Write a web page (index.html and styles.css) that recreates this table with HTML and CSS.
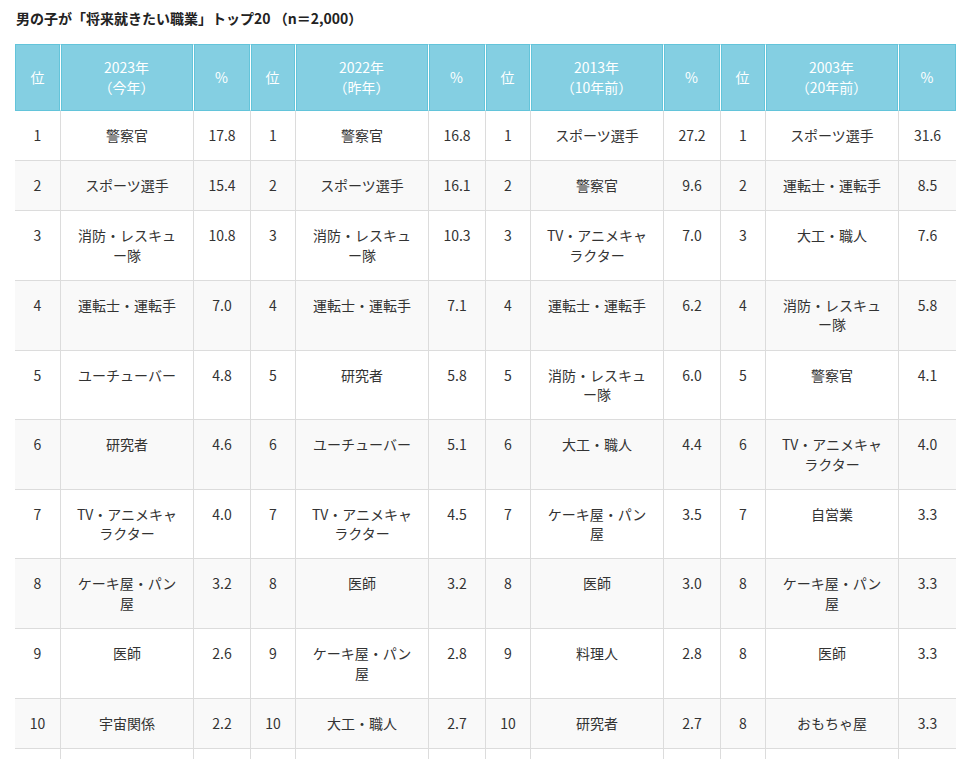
FILE: index.html
```html
<!DOCTYPE html>
<html lang="ja">
<head>
<meta charset="utf-8">
<title>男の子が「将来就きたい職業」トップ20</title>
<link rel="stylesheet" href="styles.css">
</head>
<body>
<div class="wrap">
  <h2 class="title">男の子が「将来就きたい職業」トップ20 （n＝2,000）</h2>
  <table class="rank">
    <colgroup>
      <col class="c-rank"><col class="c-job"><col class="c-pct">
      <col class="c-rank"><col class="c-job"><col class="c-pct">
      <col class="c-rank"><col class="c-job"><col class="c-pct">
      <col class="c-rank"><col class="c-job"><col class="c-pct-last">
    </colgroup>
    <thead>
      <tr>
        <th>位</th><th>2023年<br>（今年）</th><th>%</th>
        <th>位</th><th>2022年<br>（昨年）</th><th>%</th>
        <th>位</th><th>2013年<br>（10年前）</th><th>%</th>
        <th>位</th><th>2003年<br>（20年前）</th><th>%</th>
      </tr>
    </thead>
    <tbody>
      <tr><td>1</td><td>警察官</td><td>17.8</td><td>1</td><td>警察官</td><td>16.8</td><td>1</td><td>スポーツ選手</td><td>27.2</td><td>1</td><td>スポーツ選手</td><td>31.6</td></tr>
      <tr><td>2</td><td>スポーツ選手</td><td>15.4</td><td>2</td><td>スポーツ選手</td><td>16.1</td><td>2</td><td>警察官</td><td>9.6</td><td>2</td><td>運転士・運転手</td><td>8.5</td></tr>
      <tr><td>3</td><td>消防・レスキュー隊</td><td>10.8</td><td>3</td><td>消防・レスキュー隊</td><td>10.3</td><td>3</td><td>TV・アニメキャラクター</td><td>7.0</td><td>3</td><td>大工・職人</td><td>7.6</td></tr>
      <tr><td>4</td><td>運転士・運転手</td><td>7.0</td><td>4</td><td>運転士・運転手</td><td>7.1</td><td>4</td><td>運転士・運転手</td><td>6.2</td><td>4</td><td>消防・レスキュー隊</td><td>5.8</td></tr>
      <tr><td>5</td><td>ユーチューバー</td><td>4.8</td><td>5</td><td>研究者</td><td>5.8</td><td>5</td><td>消防・レスキュー隊</td><td>6.0</td><td>5</td><td>警察官</td><td>4.1</td></tr>
      <tr><td>6</td><td>研究者</td><td>4.6</td><td>6</td><td>ユーチューバー</td><td>5.1</td><td>6</td><td>大工・職人</td><td>4.4</td><td>6</td><td>TV・アニメキャラクター</td><td>4.0</td></tr>
      <tr><td>7</td><td>TV・アニメキャラクター</td><td>4.0</td><td>7</td><td>TV・アニメキャラクター</td><td>4.5</td><td>7</td><td>ケーキ屋・パン屋</td><td>3.5</td><td>7</td><td>自営業</td><td>3.3</td></tr>
      <tr><td>8</td><td>ケーキ屋・パン屋</td><td>3.2</td><td>8</td><td>医師</td><td>3.2</td><td>8</td><td>医師</td><td>3.0</td><td>8</td><td>ケーキ屋・パン屋</td><td>3.3</td></tr>
      <tr><td>9</td><td>医師</td><td>2.6</td><td>9</td><td>ケーキ屋・パン屋</td><td>2.8</td><td>9</td><td>料理人</td><td>2.8</td><td>8</td><td>医師</td><td>3.3</td></tr>
      <tr><td>10</td><td>宇宙関係</td><td>2.2</td><td>10</td><td>大工・職人</td><td>2.7</td><td>10</td><td>研究者</td><td>2.7</td><td>8</td><td>おもちゃ屋</td><td>3.3</td></tr>
      <tr class="tail"><td></td><td></td><td></td><td></td><td></td><td></td><td></td><td></td><td></td><td></td><td></td><td></td></tr>
    </tbody>
  </table>
</div>
</body>
</html>
```

FILE: styles.css
```css
html, body {
  margin: 0;
  padding: 0;
  background: #fff;
}

body {
  font-family: "Noto Sans CJK JP", "Noto Sans", sans-serif;
  color: #333;
}

.wrap {
  padding: 8px 13px 0 15px;
}

.title {
  margin: 0 0 16px 1px;
  font-size: 14px;
  line-height: 20px;
  font-weight: bold;
  color: #222;
}

.rank {
  width: 941px;
  table-layout: fixed;
  border-collapse: separate;
  border-spacing: 0;
  font-size: 14px;
  line-height: 19.5px;
}

.c-rank { width: 45px; }
.c-job { width: 133px; }
.c-pct { width: 57px; }
.c-pct-last { width: 58px; }

.rank th {
  background: #84cfe2;
  color: #fff;
  font-weight: normal;
  text-align: center;
  vertical-align: middle;
  padding: 13px 4px;
  border: 1px solid #63c4da;
}

.rank th + th {
  border-left: 1px solid #fff;
  box-shadow: inset 1px 0 0 #63c4da;
}

.rank td {
  text-align: center;
  vertical-align: top;
  padding: 15px 15px 14.65px;
  border-bottom: 1px solid #dcdcdc;
  line-break: loose;
  word-break: normal;
}

.rank td:nth-child(3n+1),
.rank td:nth-child(3n) {
  padding-left: 2px;
  padding-right: 2px;
}

.rank td + td {
  border-left: 1px solid #dcdcdc;
}

.rank tbody tr:nth-child(even) td {
  background: #f9f9f9;
}

.rank .tail td {
  height: 20px;
}
```
